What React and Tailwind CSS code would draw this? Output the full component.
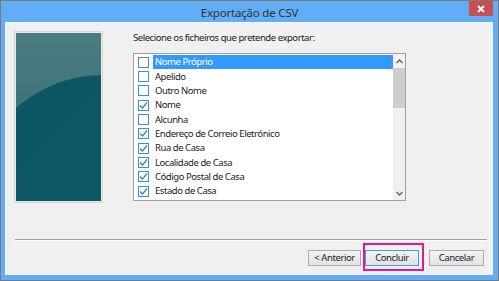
import React from "react";

const fields = [
  { label: "Nome Próprio", checked: false, selected: true },
  { label: "Apelido", checked: false },
  { label: "Outro Nome", checked: false },
  { label: "Nome", checked: true },
  { label: "Alcunha", checked: false },
  { label: "Endereço de Correio Eletrónico", checked: true },
  { label: "Rua de Casa", checked: true },
  { label: "Localidade de Casa", checked: true },
  { label: "Código Postal de Casa", checked: true },
  { label: "Estado de Casa", checked: true },
];

const CheckBox = ({ checked }) => (
  <div className="w-[11px] h-[11px] border border-[#3c8fd6] bg-white flex items-center justify-center shrink-0">
    {checked && (
      <svg width="9" height="9" viewBox="0 0 9 9">
        <path d="M1 4.5 L3.5 7 L8 1.5" fill="none" stroke="#2f7fc4" strokeWidth="1.2" />
      </svg>
    )}
  </div>
);

const Button = ({ children, focused, w }) => (
  <div
    className={`h-[16px] flex items-center justify-center text-[9.5px] tracking-[-0.4px] text-[#222] bg-gradient-to-b from-[#f2f2f2] to-[#e3e3e3] border ${w} ${
      focused ? "border-[#3c9ee6]" : "border-[#acacac]"
    }`}
  >
    {children}
  </div>
);

export default function App() {
  return (
    <div
      className="w-[499px] h-[281px] bg-[#62aef6] border border-[#7a7a7a] flex flex-col"
      style={{ fontFamily: '"Noto Sans", "Open Sans", sans-serif' }}
    >
      {/* Title bar */}
      <div className="relative h-[21px] flex items-center justify-center">
        <span className="text-[11.5px] tracking-[-0.2px] text-[#333] leading-none mt-[2px]">Exportação de CSV</span>
        <div className="absolute right-[5px] top-0 w-[24px] h-[15px] bg-[#c74e52] flex items-center justify-center">
          <svg width="8" height="8" viewBox="0 0 8 8">
            <path d="M1 1 L7 7 M7 1 L1 7" stroke="white" strokeWidth="1.8" />
          </svg>
        </div>
      </div>

      {/* Client area */}
      <div className="ml-[4px] mr-[5px] flex-1 mb-[5px] bg-[#f0f0f0] border-l border-t border-[#fafafa] flex flex-col">
        <div className="flex pt-[8px] pl-[8px] h-[181px]">
          {/* Side picture */}
          <div className="w-[89px] h-[172px] border border-[#d6d6d6] p-[1px] bg-[#e8e8e8]">
            <div className="relative w-full h-full overflow-hidden bg-gradient-to-b from-[#4a7c80] to-[#2e6b70]">
              <div className="absolute left-[-44px] top-[42px] w-[262px] h-[262px] rounded-full bg-gradient-to-br from-[#0e5561] via-[#0b5965] to-[#136c7a]" />
            </div>
          </div>

          {/* Field list */}
          <div className="ml-[30px] flex flex-col">
            <div className="text-[9.5px] tracking-[-0.45px] text-[#222] leading-none h-[22px] pt-[2px]">
              Selecione os ficheiros que pretende exportar:
            </div>
            <div className="w-[273px] h-[148px] border border-[#a0a0a0] bg-white flex">
              <div className="flex-1 pt-[1px]">
                {fields.map((f) => (
                  <div key={f.label} className="h-[14.33px] flex items-center pl-[4px]">
                    <CheckBox checked={f.checked} />
                    <div
                      className={`ml-[4px] flex-1 h-full flex items-center pl-[2px] text-[9.5px] tracking-[-0.45px] leading-none ${
                        f.selected ? "bg-[#3399ff] text-white" : "text-[#222]"
                      }`}
                    >
                      {f.label}
                    </div>
                  </div>
                ))}
              </div>
              {/* Scrollbar */}
              <div className="w-[12px] bg-[#f0f0f0] flex flex-col items-center">
                <div className="h-[14px] flex items-center justify-center">
                  <svg width="7" height="5" viewBox="0 0 7 5">
                    <path d="M0.5 4 L3.5 1 L6.5 4" fill="none" stroke="#606060" strokeWidth="1.3" />
                  </svg>
                </div>
                <div className="w-full h-[40px] bg-[#cdcdcd]" />
                <div className="flex-1" />
                <div className="h-[14px] flex items-center justify-center">
                  <svg width="7" height="5" viewBox="0 0 7 5">
                    <path d="M0.5 1 L3.5 4 L6.5 1" fill="none" stroke="#606060" strokeWidth="1.3" />
                  </svg>
                </div>
              </div>
            </div>
          </div>
        </div>

        {/* Separator */}
        <div className="mt-[35px] ml-[9px] mr-[6px] h-[2px] border-t border-[#a0a0a0] border-b border-b-white" />

        {/* Buttons */}
        <div className="flex justify-end items-center pr-[9px] mt-[9px]">
          <Button w="w-[53px]">&lt; Anterior</Button>
          <div className="relative ml-[4px]">
            <Button focused w="w-[54px]">Concluir</Button>
            <div className="absolute left-[-2px] right-[-5px] top-[-7px] bottom-[-5px] border-2 border-[#e5198c]" />
          </div>
          <div className="ml-[10px]">
            <Button w="w-[55px]">Cancelar</Button>
          </div>
        </div>
      </div>
    </div>
  );
}
